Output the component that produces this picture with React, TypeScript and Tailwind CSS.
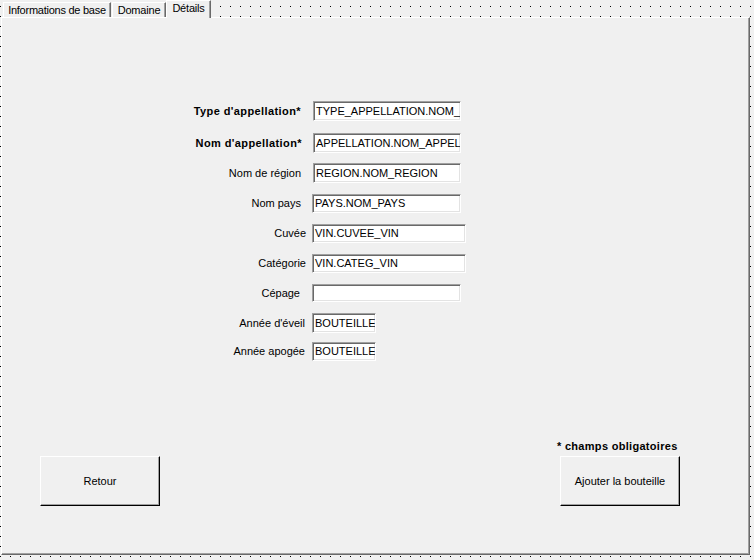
import React from "react";

const font = { fontFamily: '"Liberation Sans", Arial, sans-serif' };

type Row = {
  label: string;
  bold?: boolean;
  value: string;
  rowCls: string;
  labelCls: string;
  boxCls: string;
};

const rows: Row[] = [
  { label: "Type d'appellation*", bold: true, value: "TYPE_APPELLATION.NOM_", rowCls: "mt-[83px] h-[20px]", labelCls: "w-[299px]", boxCls: "ml-[12px] w-[148px] h-[20px]" },
  { label: "Nom d'appellation*", bold: true, value: "APPELLATION.NOM_APPELLATION", rowCls: "mt-[12px] h-[20px]", labelCls: "w-[300px]", boxCls: "ml-[11px] w-[148px] h-[20px]" },
  { label: "Nom de région", value: "REGION.NOM_REGION", rowCls: "mt-[10px] h-[20px]", labelCls: "w-[299px]", boxCls: "ml-[12px] w-[148px] h-[20px]" },
  { label: "Nom pays", value: "PAYS.NOM_PAYS", rowCls: "mt-[11px] h-[19px]", labelCls: "w-[299px]", boxCls: "ml-[11px] w-[149px] h-[19px]" },
  { label: "Cuvée", value: "VIN.CUVEE_VIN", rowCls: "mt-[11px] h-[19px]", labelCls: "w-[304px]", boxCls: "ml-[6px] w-[154px] h-[19px]" },
  { label: "Catégorie", value: "VIN.CATEG_VIN", rowCls: "mt-[11px] h-[19px]", labelCls: "w-[304px]", boxCls: "ml-[6px] w-[154px] h-[19px]" },
  { label: "Cépage", value: "", rowCls: "mt-[11px] h-[18px]", labelCls: "w-[298px]", boxCls: "ml-[12px] w-[149px] h-[18px]" },
  { label: "Année d'éveil", value: "BOUTEILLE", rowCls: "mt-[11px] h-[20px]", labelCls: "w-[303px]", boxCls: "ml-[7px] w-[64px] h-[20px]" },
  { label: "Année apogée", value: "BOUTEILLE", rowCls: "mt-[9px] h-[19px]", labelCls: "w-[303px]", boxCls: "ml-[7px] w-[64px] h-[19px]" },
];

function WinButton({ children, cls }: { children: React.ReactNode; cls: string }) {
  return (
    <div
      className={
        "flex items-center justify-center w-[120px] h-[50px] bg-[#f0f0f0] border border-t-white border-l-white border-r-black border-b-black shadow-[inset_-1px_-1px_0_#a0a0a0] text-[11px] text-black " +
        cls
      }
    >
      {children}
    </div>
  );
}

export default function App() {
  return (
    <div className="relative w-[754px] h-[560px] bg-[#f0f0f0] overflow-hidden text-black" style={font}>
      <svg className="absolute inset-0" width="754" height="560">
        <defs>
          <pattern id="dots" x="0" y="0" width="10" height="10" patternUnits="userSpaceOnUse">
            <rect x="0" y="6" width="1" height="1" fill="#000" />
          </pattern>
        </defs>
        <rect width="754" height="560" fill="url(#dots)" />
      </svg>

      <div className="relative flex flex-col">
        {/* tab strip */}
        <div className="relative z-10 flex items-end h-[17px]">
          <div className="ml-[3px] w-[108px] h-[15px] flex items-center justify-center bg-[#f0f0f0] border-t border-l border-t-white border-l-white border-r border-r-[#696969] shadow-[inset_-1px_0_0_#a0a0a0] text-[11px] leading-[13px] tracking-[-0.25px] whitespace-nowrap">
            Informations de base
          </div>
          <div className="ml-[1px] w-[54px] h-[15px] flex items-center justify-center bg-[#f0f0f0] border-t border-l border-t-white border-l-white border-r border-r-[#696969] shadow-[inset_-1px_0_0_#a0a0a0] text-[11px] leading-[13px] tracking-[-0.2px] whitespace-nowrap">
            Domaine
          </div>
          <div className="w-[45px] h-[18px] -mb-[1px] flex items-start justify-center pt-[1px] bg-[#f0f0f0] border-t border-l border-t-white border-l-white border-r border-r-[#696969] shadow-[inset_-1px_0_0_#a0a0a0] text-[11px] leading-[13px] tracking-[-0.2px] whitespace-nowrap">
            Détails
          </div>
        </div>

        {/* panel */}
        <div className="ml-[1px] w-[749px] h-[538px] flex flex-col bg-[#f0f0f0] border-t border-l border-t-white border-l-white border-r border-b border-r-[#696969] border-b-[#696969] shadow-[inset_-1px_-1px_0_#a0a0a0]">
          <div className="flex flex-col">
            {rows.map((r) => (
              <div key={r.label} className={"flex items-center " + r.rowCls}>
                <div
                  className={
                    "text-right text-[11px] leading-[13px] whitespace-nowrap " +
                    r.labelCls +
                    (r.bold ? " font-bold tracking-[0.4px]" : "")
                  }
                >
                  {r.label}
                </div>
                <div
                  className={
                    "flex items-center bg-white border border-t-[#a0a0a0] border-l-[#a0a0a0] border-r-white border-b-white shadow-[inset_1px_1px_0_#696969,inset_-1px_-1px_0_#e3e3e3] pl-[2px] overflow-hidden whitespace-nowrap text-[11px] leading-[13px] " +
                    r.boxCls
                  }
                >
                  {r.value}
                </div>
              </div>
            ))}
          </div>

          <div className="flex items-end mt-[79px]">
            <WinButton cls="ml-[38px]">Retour</WinButton>
            <div className="ml-[397px] flex flex-col items-start">
              <div className="text-[11px] leading-[13px] font-bold tracking-[0.3px] whitespace-nowrap">* champs obligatoires</div>
              <WinButton cls="ml-[3px] mt-[3px]">Ajouter la bouteille</WinButton>
            </div>
          </div>
        </div>
      </div>
    </div>
  );
}
